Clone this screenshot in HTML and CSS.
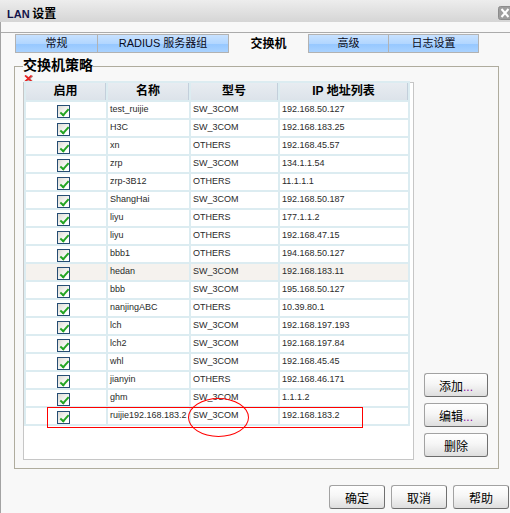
FILE: index.html
```html
<!DOCTYPE html>
<html lang="zh-CN">
<head>
    <meta charset="UTF-8">
    <meta name="viewport" content="width=device-width, initial-scale=1.0">
    <title>LAN 设置</title>
    <link rel="stylesheet" href="styles.css">
</head>
<body>
    <div class="titlebar">
        <span class="title"><span class="lan">LAN</span> 设置</span>
        <svg class="close" width="12" height="14" viewBox="0 0 12 14">
            <rect x="0.5" y="0.5" width="16" height="13" rx="2" fill="#9e9e9e" stroke="#8c8c8c"/>
            <path d="M3.5 3 L10.5 11 M10.5 3 L3.5 11" stroke="#fff" stroke-width="2"/>
        </svg>
    </div>

    <div class="panel">
        <div class="tabbar">
            <div class="tab t-general">常规</div>
            <div class="tab t-radius">RADIUS 服务器组</div>
            <div class="tab t-switch active">交换机</div>
            <div class="tab t-adv">高级</div>
            <div class="tab t-log">日志设置</div>
        </div>

        <fieldset class="group">
            <legend>交换机策略</legend>

            <div class="list-side">
                <!-- delete marker above the list -->
                <svg class="del-icon" width="9" height="7" viewBox="0 0 9 7">
                    <path d="M1.5 0.5 L8 6.5 M8 0.5 L1.5 6.5" stroke="#7a1010" stroke-width="1.6" transform="translate(0.6 0.4)" opacity="0.5"/>
                    <path d="M1 0.5 L7.5 6.5 M7.5 0.5 L1 6.5" stroke="#ec1c1c" stroke-width="1.6"/>
                </svg>

                <div class="grid">
                    <table>
                        <colgroup>
                            <col class="c-on">
                            <col class="c-name">
                            <col class="c-type">
                            <col class="c-ip">
                        </colgroup>
                        <thead>
                            <tr><th>启用</th><th>名称</th><th>型号</th><th>IP 地址列表</th></tr>
                        </thead>
                        <tbody>
                            <tr><td class="on"><span class="chk"></span></td><td>test_ruijie</td><td>SW_3COM</td><td>192.168.50.127</td></tr>
                            <tr><td class="on"><span class="chk"></span></td><td>H3C</td><td>SW_3COM</td><td>192.168.183.25</td></tr>
                            <tr><td class="on"><span class="chk"></span></td><td>xn</td><td>OTHERS</td><td>192.168.45.57</td></tr>
                            <tr><td class="on"><span class="chk"></span></td><td>zrp</td><td>SW_3COM</td><td>134.1.1.54</td></tr>
                            <tr><td class="on"><span class="chk"></span></td><td>zrp-3B12</td><td>OTHERS</td><td>11.1.1.1</td></tr>
                            <tr><td class="on"><span class="chk"></span></td><td>ShangHai</td><td>SW_3COM</td><td>192.168.50.187</td></tr>
                            <tr><td class="on"><span class="chk"></span></td><td>liyu</td><td>OTHERS</td><td>177.1.1.2</td></tr>
                            <tr><td class="on"><span class="chk"></span></td><td>liyu</td><td>OTHERS</td><td>192.168.47.15</td></tr>
                            <tr><td class="on"><span class="chk"></span></td><td>bbb1</td><td>OTHERS</td><td>194.168.50.127</td></tr>
                            <tr class="hover"><td class="on"><span class="chk"></span></td><td>hedan</td><td>SW_3COM</td><td>192.168.183.11</td></tr>
                            <tr><td class="on"><span class="chk"></span></td><td>bbb</td><td>SW_3COM</td><td>195.168.50.127</td></tr>
                            <tr><td class="on"><span class="chk"></span></td><td>nanjingABC</td><td>OTHERS</td><td>10.39.80.1</td></tr>
                            <tr><td class="on"><span class="chk"></span></td><td>lch</td><td>SW_3COM</td><td>192.168.197.193</td></tr>
                            <tr><td class="on"><span class="chk"></span></td><td>lch2</td><td>SW_3COM</td><td>192.168.197.84</td></tr>
                            <tr><td class="on"><span class="chk"></span></td><td>whl</td><td>SW_3COM</td><td>192.168.45.45</td></tr>
                            <tr><td class="on"><span class="chk"></span></td><td>jianyin</td><td>OTHERS</td><td>192.168.46.171</td></tr>
                            <tr><td class="on"><span class="chk"></span></td><td>ghm</td><td>SW_3COM</td><td>1.1.1.2</td></tr>
                            <tr><td class="on"><span class="chk"></span></td><td>ruijie192.168.183.2</td><td>SW_3COM</td><td>192.168.183.2</td></tr>
                        </tbody>
                    </table>

                    <!-- red pen marks over the last row -->
                    <div class="mark-row"></div>
                    <div class="mark-ring"></div>
                </div>
            </div>

            <div class="side-buttons">
                <button class="btn">添加<span class="dots">...</span></button>
                <button class="btn">编辑<span class="dots">...</span></button>
                <button class="btn">删除</button>
            </div>
        </fieldset>

        <div class="footer">
            <button class="btn">确定</button>
            <button class="btn">取消</button>
            <button class="btn">帮助</button>
        </div>
    </div>
</body>
</html>
```

FILE: styles.css
```css
* {
    margin: 0;
    padding: 0;
    box-sizing: border-box;
}

body {
    font-family: "Liberation Sans", "Noto Sans CJK SC", sans-serif;
    font-size: 12px;
    color: #000;
    background: #f8f8f8;
    width: 510px;
    height: 513px;
    overflow: hidden;
}

/* window title */
.titlebar {
    height: 22px;
    display: flex;
    justify-content: space-between;
    align-items: flex-start;
    background: linear-gradient(#ededed, #d5d5d5);
}

.title {
    padding: 4px 0 0 7px;
    line-height: 18px;
    font-family: "Noto Sans CJK SC", sans-serif;
    font-size: 12px;
    font-weight: bold;
}

.title .lan {
    font-family: "Liberation Sans", sans-serif;
    font-size: 11px;
    color: #14144a;
}

.close {
    display: block;
    margin-top: 6px;
}

.panel {
    height: 491px;
    border-left: 1px solid #a3a3a3;
    padding-top: 10px;
}

/* tabs */
.tabbar {
    display: flex;
    border-top: 1px solid #ababab;
    padding: 1px 0 0 14px;
}

.tab {
    height: 19px;
    margin-left: -1px;
    border: 1px solid #b2b2b2;
    text-align: center;
    font-size: 11px;
    line-height: 16px;
    color: #0a0a20;
    background: linear-gradient(#c8e2ff, #b2d6ff 50%, #97c8ff 56%, #a9d2ff);
}

.tab:first-child {
    margin-left: 0;
}

.t-general { width: 83px; }
.t-radius { width: 132px; }
.t-switch { width: 81px; }
.t-adv { width: 81px; }
.t-log { width: 91px; }

.tab.active {
    background: none;
    border-color: transparent;
    font-family: "Noto Sans CJK SC", sans-serif;
    font-size: 12px;
    font-weight: bold;
    color: #000;
}

/* group box */
.group {
    display: flex;
    margin: 4px 11px 0 13px;
    border: 1px solid #afac9e;
    padding: 0 10px 8px 8px;
}

.group legend {
    font-family: "Noto Sans CJK SC", sans-serif;
    font-size: 14px;
    font-weight: bold;
    line-height: 14px;
    padding-bottom: 4px;
}

.list-side {
    display: flex;
    flex-direction: column;
}

.del-icon {
    display: block;
    margin-left: 1px;
}

.grid {
    position: relative;
    width: 391px;
    height: 378px;
    border: 1px solid #c6c6c6;
    background: #fff;
}

.grid table {
    table-layout: fixed;
    width: 386px;
    margin-top: -2px;
    border-spacing: 2px;
    background: #dcecf1;
}

.c-on { width: 80px; }
.c-name { width: 81px; }
.c-type { width: 87px; }
.c-ip { width: 128px; }

.grid th {
    height: 17px;
    padding: 0;
    line-height: 17px;
    font-size: 12px;
    font-weight: bold;
    background: linear-gradient(#e8ecf1, #dce3ea);
    border-right: 1px solid #c3cfdb;
}

.grid td {
    height: 16px;
    padding: 0 0 1px 2px;
    line-height: 15px;
    font-size: 9px;
    color: #2a2a2a;
    background: #fff;
    white-space: nowrap;
    overflow: hidden;
}

.grid tr.hover td {
    background: #f5f2ee;
}

.grid td.on {
    padding: 0 6px 0 0;
    vertical-align: top;
}

.chk {
    position: relative;
    display: block;
    width: 13px;
    height: 13px;
    margin: 3px auto 0;
    border: 1px solid #264d74;
    background: linear-gradient(135deg, #dddbd3, #fff 75%);
}

.chk::after {
    content: "";
    position: absolute;
    left: 4px;
    top: 1px;
    width: 3px;
    height: 7px;
    border: solid #22a422;
    border-width: 0 2px 2px 0;
    transform: rotate(42deg);
}

.mark-row {
    position: absolute;
    left: 23px;
    top: 324px;
    width: 316px;
    height: 21px;
    border: 1px solid #f00;
}

.mark-ring {
    position: absolute;
    left: 164px;
    top: 315px;
    width: 61px;
    height: 39px;
    border: 1px solid #f00;
    border-radius: 50%;
}

/* buttons */
.side-buttons {
    display: flex;
    flex-direction: column;
    justify-content: flex-end;
    gap: 6px;
    margin-left: 10px;
    padding-bottom: 3px;
}

.btn {
    width: 64px;
    height: 24px;
    padding: 0;
    border: 1px solid;
    border-color: #a2a2a2 #707070 #6c6c6c #a2a2a2;
    border-radius: 3px;
    background: linear-gradient(#fff, #f6f6f6 45%, #dedede);
    font-family: "Noto Sans CJK SC", sans-serif;
    font-size: 12px;
    color: #000;
}

.btn .dots {
    font-family: "Liberation Sans", sans-serif;
    color: #8a0aa0;
}

.footer {
    display: flex;
    justify-content: flex-end;
    gap: 6px;
    margin-top: 16px;
    padding-right: 1px;
}

.footer .btn {
    width: 56px;
}
```
